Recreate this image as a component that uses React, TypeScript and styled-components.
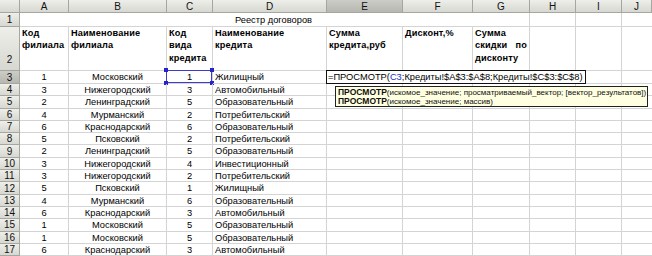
import React from 'react';
import styled, { createGlobalStyle, css } from 'styled-components';

// Excel-like sheet: "Реестр договоров" with a LOOKUP formula being edited in E3

const GlobalStyle = createGlobalStyle`
  html, body {
    margin: 0;
    padding: 0;
    background: #ffffff;
  }
  body {
    font-family: "Liberation Sans", Arial, sans-serif;
    font-size: 9.3px;
    color: #000;
  }
`;

const COLS = [20, 49, 98, 46, 114, 76, 70, 57, 46, 46, 30];
const LETTERS = ['A', 'B', 'C', 'D', 'E', 'F', 'G', 'H', 'I', 'J'];

const rows: [number, string, number, string][] = [
  [1, 'Московский', 1, 'Жилищный'],
  [3, 'Нижегородский', 3, 'Автомобильный'],
  [2, 'Ленинградский', 5, 'Образовательный'],
  [4, 'Мурманский', 2, 'Потребительский'],
  [6, 'Краснодарский', 6, 'Образовательный'],
  [5, 'Псковский', 2, 'Потребительский'],
  [2, 'Ленинградский', 5, 'Образовательный'],
  [3, 'Нижегородский', 4, 'Инвестиционный'],
  [3, 'Нижегородский', 2, 'Потребительский'],
  [5, 'Псковский', 1, 'Жилищный'],
  [4, 'Мурманский', 6, 'Образовательный'],
  [6, 'Краснодарский', 3, 'Автомобильный'],
  [1, 'Московский', 5, 'Образовательный'],
  [1, 'Московский', 5, 'Образовательный'],
  [6, 'Краснодарский', 3, 'Автомобильный'],
];

const Sheet = styled.div`
  display: grid;
  grid-template-columns: ${COLS.map(c => `${c}px`).join(' ')};
  grid-template-rows: 13px 14px 44px 13px repeat(14, 12.3px);
  width: 652px;
  height: 256px;
  overflow: hidden;
  background: #fff;
`;

const headerBase = css<{ $active?: boolean }>`
  background: ${p => (p.$active ? 'linear-gradient(#cdcdc8, #b7b7b1)' : 'linear-gradient(#eeeeea, #d8d8d2)')};
  border-right: 1px solid #a6a6a0;
  border-bottom: 1px solid #a6a6a0;
  box-sizing: border-box;
  color: #111;
  font-size: 10px;
  display: flex;
  justify-content: center;
`;

const Corner = styled.div`
  ${headerBase};
`;

const ColHeader = styled.div<{ $active?: boolean }>`
  ${headerBase};
  align-items: center;
`;

const RowHeader = styled.div<{ $active?: boolean; $bottom?: boolean }>`
  ${headerBase};
  align-items: ${p => (p.$bottom ? 'flex-end' : 'center')};
  padding-bottom: ${p => (p.$bottom ? '5px' : '0')};
  line-height: 11px;
`;

const Cell = styled.div<{ $align?: 'left' | 'center' | 'justify'; $noRight?: boolean }>`
  position: relative;
  box-sizing: border-box;
  border-right: ${p => (p.$noRight ? 'none' : '1px solid #d4d4d4')};
  border-bottom: 1px solid #d4d4d4;
  padding: 0 2px;
  white-space: nowrap;
  text-align: ${p => p.$align || 'left'};
  line-height: 12px;
  font-size: 9.3px;
`;

const TitleCell = styled(Cell)`
  grid-column: span 7;
  text-align: center;
  line-height: 14px;
  padding-left: 0;
`;

const HeadCell = styled(Cell)`
  white-space: normal;
  font-weight: bold;
  font-size: 9.2px;
  line-height: 12.3px;
  padding-top: 0;
  letter-spacing: 0.15px;
  text-align-last: ${p => (p.$align === 'justify' ? 'left' : 'auto')};
`;

const RangeBox = styled.div`
  position: absolute;
  inset: -1px 0 0 -1px;
  border: 1px solid #3b3bd1;
  pointer-events: none;
`;

const Handle = styled.span<{ $x: 'left' | 'right'; $y: 'top' | 'bottom' }>`
  position: absolute;
  width: 4px;
  height: 4px;
  background: #2424c8;
  ${p => p.$x}: -3px;
  ${p => p.$y}: -3px;
`;

const Editor = styled.div`
  position: absolute;
  left: -1px;
  top: -1px;
  height: 14px;
  box-sizing: border-box;
  border: 1px solid #111;
  background: #fff;
  padding: 0 2px 0 1px;
  line-height: 12px;
  font-size: 9.3px;
  z-index: 2;
`;

const RefText = styled.span`
  color: #2a2ad0;
`;

const Tip = styled.div`
  position: absolute;
  left: 8px;
  top: 15px;
  width: 313px;
  box-sizing: border-box;
  background: #ffffe1;
  border: 1px solid #222;
  padding: 1px 2px 0;
  font-size: 8px;
  line-height: 9px;
  white-space: nowrap;
  z-index: 3;
  color: #111;
`;

const TipName = styled.b`
  font-size: 8.5px;
`;

const cellsAfterD = 6;

export default function App() {
  return (
    <>
      <GlobalStyle />
      <Sheet>
        <Corner />
        {LETTERS.map(l => (
          <ColHeader key={l} $active={l === 'E'}>
            {l}
          </ColHeader>
        ))}

        <RowHeader>1</RowHeader>
        <TitleCell>Реестр договоров</TitleCell>
        <Cell />
        <Cell />
        <Cell $noRight />

        <RowHeader $bottom>2</RowHeader>
        <HeadCell>Код филиала</HeadCell>
        <HeadCell>Наименование филиала</HeadCell>
        <HeadCell>Код вида кредита</HeadCell>
        <HeadCell>Наименование кредита</HeadCell>
        <HeadCell>Сумма кредита,руб</HeadCell>
        <HeadCell>Дисконт,%</HeadCell>
        <HeadCell $align="justify">Сумма скидки по дисконту</HeadCell>
        <Cell />
        <Cell />
        <Cell $noRight />

        {rows.map((r, i) => {
          const rowNo = i + 3;
          const isFirst = i === 0;
          return (
            <React.Fragment key={rowNo}>
              <RowHeader $active={isFirst}>{rowNo}</RowHeader>
              <Cell $align="center">{r[0]}</Cell>
              <Cell $align="center">{r[1]}</Cell>
              <Cell $align="center">
                {r[2]}
                {isFirst && (
                  <RangeBox>
                    <Handle $x="left" $y="top" />
                    <Handle $x="right" $y="top" />
                    <Handle $x="left" $y="bottom" />
                    <Handle $x="right" $y="bottom" />
                  </RangeBox>
                )}
              </Cell>
              <Cell>{r[3]}</Cell>
              {Array.from({ length: cellsAfterD }).map((_, k) => (
                <Cell key={k} $noRight={k === cellsAfterD - 1}>
                  {isFirst && k === 0 && (
                    <>
                      <Editor>
                        =ПРОСМОТР(<RefText>C3</RefText>;Кредиты!$A$3:$A$8;Кредиты!$C$3:$C$8)
                      </Editor>
                      <Tip>
                        <div>
                          <TipName>ПРОСМОТР</TipName>(искомое_значение; просматриваемый_вектор; [вектор_результатов])
                        </div>
                        <div>
                          <TipName>ПРОСМОТР</TipName>(искомое_значение; массив)
                        </div>
                      </Tip>
                    </>
                  )}
                </Cell>
              ))}
            </React.Fragment>
          );
        })}
      </Sheet>
    </>
  );
}
